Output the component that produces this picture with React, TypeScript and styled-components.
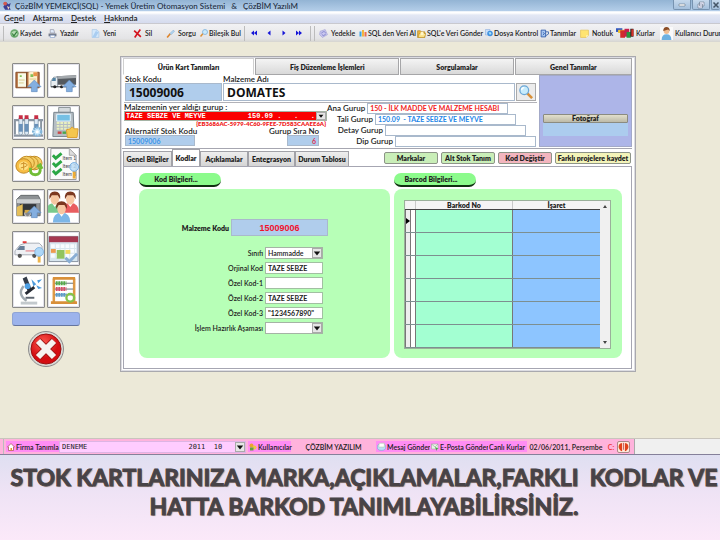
import React from "react";
import styled, { createGlobalStyle, css } from "styled-components";

const Global = createGlobalStyle`
  *, *::before, *::after { box-sizing: border-box; }
  body { margin: 0; background: #f9e8f8; color: #222; font: 7px/10px Lato, sans-serif; }
  button, input, select { font: inherit; color: inherit; margin: 0; border-radius: 0; min-width: 0; }
  button { cursor: pointer; padding: 0; }
  a { color: inherit; text-decoration: none; }
`;

/* ---------- frame ---------- */
const Page = styled.div`
  min-height: 100vh;
  display: flex;
  flex-direction: column;
  overflow: hidden;
`;
const TitleBar = styled.header`
  height: 12px;
  display: flex;
  align-items: center;
  gap: 3px;
  padding-left: 2px;
  background: linear-gradient(#93b4d4, #b4cee9);
  border-bottom: 1px solid #eef4fa;
  font-size: 8px;
  font-weight: 500;
  white-space: pre;
  color: #1c2c40;
`;
const WindowButtons = styled.div`
  margin-left: auto;
  display: flex;
  align-self: stretch;
  gap: 1px;
`;
const WindowButton = styled.button`
  width: 18px;
  height: 10px;
  display: grid;
  place-items: center;
  border: 1px solid #7793b0;
  border-top: 0;
  border-radius: 0 0 2px 2px;
  background: linear-gradient(#c6d9ec, #a5c0dc);
  &:last-child { width: 9px; border-right: 0; }
`;
const MenuBar = styled.nav`
  height: 11px;
  display: flex;
  align-items: center;
  gap: 8px;
  padding-left: 4px;
  background: linear-gradient(#fff 1px, #e3e8f4 3px, #d5dbee);
  font-size: 8px;
  font-weight: 600;
`;
const ToolStrip = styled.div`
  height: 19px;
  display: flex;
  align-items: center;
  background: linear-gradient(#f2f2f4, #e4e4e6 80%, #d6d5d0);
  border-top: 1px solid #c9c9cf;
  padding-left: 3px;
`;
const Rule = styled.span<{ $gap: number }>`
  width: 1px;
  height: 15px;
  flex: none;
  margin-right: ${(p) => p.$gap}px;
  background: #bcbcbc;
`;
const Tool = styled.button<{ $w: number; $gap?: number }>`
  width: ${(p) => p.$w}px;
  flex: none;
  display: flex;
  align-items: center;
  gap: ${(p) => p.$gap ?? 1}px;
  border: 0;
  background: none;
  white-space: nowrap;
  font-size: 7px;
  font-weight: 600;
  svg { flex: none; }
`;
const Workspace = styled.main`
  display: flex;
  align-items: flex-start;
  gap: 40px;
  padding: 14px 84px 66px 12px;
  background: #ece9d8;
`;

/* ---------- side bar ---------- */
const Side = styled.aside`
  width: 68px;
  flex: none;
  display: flex;
  flex-direction: column;
  align-items: center;
  gap: 4px;
  padding-top: 7px;
`;
const IconGrid = styled.div`
  display: grid;
  grid-template-columns: 1fr 1fr;
  gap: 7px 2px;
`;
const IconButton = styled.button`
  height: 35px;
  border: 1px solid #8a8a88;
  border-radius: 1px;
  background: #fff;
  box-shadow: inset 0 0 0 1px #e2e2ea;
  svg { display: block; width: 31px; height: 33px; }
`;
const BlueBar = styled.button`
  width: 100%;
  height: 14px;
  border: 1px solid #8fa4d4;
  border-bottom-color: #65759f;
  border-radius: 3px;
  background: #9cb3ec;
`;
const CloseButton = styled.button`
  border: 0;
  background: none;
  svg { display: block; }
`;

/* ---------- card ---------- */
const Card = styled.section`
  flex: 1;
  min-width: 0;
  padding: 1px 3px 2px 1px;
  background: #fff;
  border: 1px solid #a9a9ae;
  box-shadow: inset 0 0 0 1px #dcdce2;
`;
const MainTabs = styled.div`
  display: grid;
  grid-template-columns: 132fr 145fr 114fr 118fr;
  gap: 1px;
  padding-left: 1px;
`;
const MainTab = styled.button<{ $active?: boolean }>`
  height: 17px;
  border: 1px solid #a6a6a8;
  font-size: 7px;
  font-weight: 800;
  background: linear-gradient(#f4f4f4, #d9d9d9);
  ${(p) => p.$active && css`background: #fff; border-color: #d0d0d0; border-bottom-color: #fff;`}
`;
const Form = styled.div`
  display: flex;
  gap: 2px;
  padding: 0 0 1px 2px;
  border-bottom: 1px solid #a6a6b0;
`;
const FormMain = styled.div`
  flex: 1;
  min-width: 0;
`;
const TopRow = styled.div`
  display: grid;
  grid-template-columns: 97fr 292fr 20px;
  column-gap: 1px;
  align-items: end;
  padding: 0 1px 1px;
  border-bottom: 1px solid #b2b2b8;
`;
const Field = styled.label`
  display: flex;
  flex-direction: column;
  font-size: 8px;
  line-height: 8px;
  font-weight: 600;
  white-space: nowrap;
`;
const Box = styled.input<{ $bg?: string; $h?: number }>`
  width: 100%;
  height: ${(p) => p.$h ?? 11}px;
  padding: 0 2px;
  border: 1px solid #a9b9cc;
  background: ${(p) => p.$bg ?? "#fff"};
  outline: 0;
`;
const BigBox = styled(Box)`
  padding: 0 3px;
  font: 700 12px/14px "Open Sans", sans-serif;
  color: #111;
`;
const SearchButton = styled.button`
  height: 18px;
  display: grid;
  place-items: center;
  border: 1px solid #aaa;
  background: #ececec;
`;
const GroupRow = styled.div`
  display: grid;
  grid-template-columns: 204fr 211fr;
`;
const GroupLeft = styled.div`
  display: flex;
  flex-direction: column;
  min-width: 0;
`;
const SelectWrap = styled.span<{ $h: number; $bg?: string }>`
  display: flex;
  width: 100%;
  height: ${(p) => p.$h}px;
  align-items: stretch;
  border: 1px solid #a5b3a5;
  background: ${(p) => p.$bg ?? "#fff"};
  svg { width: 10px; height: 100%; flex: none; background: #e6e6e6; border: 1px solid #aaa; }
`;
const Select = styled.select`
  flex: 1;
  width: 0;
  border: 0;
  padding: 0 2px;
  appearance: none;
  background: transparent;
  outline: 0;
`;
const RedSelect = styled(Select)`
  color: #fff;
  font: 700 7px/8px "Liberation Mono", monospace;
  padding: 0 1px;
`;
const Guid = styled.div`
  color: #f02020;
  font-size: 6px;
  line-height: 6px;
  font-weight: 800;
  text-align: right;
  padding-right: 1px;
`;
const CodeRow = styled.div`
  display: flex;
  justify-content: space-between;
  padding: 0 8px 0 1px;
`;
const CodeField = styled(Field)<{ $right?: boolean }>`
  align-items: ${(p) => (p.$right ? "flex-end" : "flex-start")};
  input { width: ${(p) => (p.$right ? 32 : 70)}px; color: ${(p) => (p.$right ? "#e02040" : "#2f8fe8")}; font-size: 7px; }
  input { text-align: ${(p) => (p.$right ? "right" : "left")}; }
`;
const GroupList = styled.div`
  display: flex;
  flex-direction: column;
  min-width: 0;
`;
const GroupField = styled.label<{ $in: number; $color?: string }>`
  display: grid;
  grid-template-columns: 1fr 141px;
  gap: 2px;
  align-items: center;
  margin-right: ${(p) => 31 - p.$in}px;
  text-align: right;
  font-size: 8px;
  line-height: 11px;
  font-weight: 600;
  white-space: nowrap;
  input { color: ${(p) => p.$color}; font-size: 7px; font-weight: 700; }
`;
const PhotoPanel = styled.div`
  width: 93px;
  flex: none;
  padding: 38px 3px 8px;
  border: 1px solid #a3a9c8;
  background: #adb5e8;
`;
const PhotoButton = styled.button`
  width: 100%;
  height: 9px;
  display: block;
  border: 1px solid #8b8b80;
  border-radius: 1px;
  background: linear-gradient(#e2dfcc, #bdbaa8);
  font-size: 7px;
  line-height: 7px;
  font-weight: 800;
`;
const PhotoInfo = styled.div`
  height: 13px;
  background: #acccee;
`;

/* ---------- sub tabs ---------- */
const SubBar = styled.div`
  display: flex;
  align-items: flex-end;
  padding-left: 1px;
`;
const SubTab = styled.button<{ $w: number; $active?: boolean }>`
  width: ${(p) => p.$w}px;
  height: 15px;
  border: 1px solid #a2a2a8;
  border-bottom: 0;
  background: linear-gradient(#eee, #d5d5d5);
  font-size: 7px;
  font-weight: 800;
  white-space: nowrap;
  ${(p) => p.$active && css`height: 17px; background: #fff;`}
`;
const Actions = styled.div`
  margin-left: auto;
  align-self: center;
  display: flex;
  gap: 3px;
  padding-right: 1px;
`;
const Action = styled.button<{ $bg: string; $wide?: boolean }>`
  width: ${(p) => (p.$wide ? 76 : 54)}px;
  height: 12px;
  border: 1px solid #8d9488;
  border-radius: 2px;
  background: ${(p) => p.$bg};
  font-size: 7px;
  line-height: 8px;
  font-weight: 800;
  white-space: nowrap;
`;
const Content = styled.div`
  display: grid;
  grid-template-columns: 251fr 228fr;
  gap: 4px;
  padding: 6px 9px 10px 15px;
  margin: 0 0 0 1px;
  border: 1px solid #a6a6b2;
`;
const Column = styled.section`
  display: flex;
  flex-direction: column;
  gap: 2px;
`;
const Pill = styled.h2`
  width: 82px;
  height: 14px;
  margin: 0;
  padding-right: 8px;
  border-radius: 7px;
  border-bottom: 2px solid #103010;
  background: #8cfb8c;
  text-align: center;
  font-size: 7px;
  line-height: 13px;
  font-weight: 800;
`;
const Green = styled.div`
  flex: 1;
  border-radius: 8px;
  background: #b7ffb7;
`;
const KodForm = styled(Green)`
  padding: 30px 62px 20px 24px;
  display: flex;
  flex-direction: column;
  gap: 3px;
`;
const KodLine = styled.label<{ $main?: boolean }>`
  display: grid;
  grid-template-columns: 1fr ${(p) => (p.$main ? 97 : 58)}px;
  gap: 2px;
  align-items: center;
  text-align: right;
  font-size: 7px;
  font-weight: ${(p) => (p.$main ? 800 : 600)};
  white-space: nowrap;
  margin-right: ${(p) => (p.$main ? 0 : 5)}px;
  margin-bottom: ${(p) => (p.$main ? 8 : 0)}px;
`;
const KodBox = styled(Box)`
  font-weight: 700;
  border-color: #a2bfa2;
`;
const MainKod = styled(Box)`
  color: #f0102c;
  text-align: center;
  font: 700 9px/12px "Liberation Sans", sans-serif;
`;
const GridPanel = styled(Green)`
  padding: 11px 11px 9px 10px;
`;
const GridFrame = styled.div`
  display: flex;
  border: 1px solid #9ab09a;
  background: #f0f0f0;
`;
const Table = styled.table`
  flex: 1;
  table-layout: fixed;
  border-collapse: collapse;
  th { height: 8px; padding: 0; background: #f4f4f4; font-size: 7px; line-height: 8px; font-weight: 800; border-bottom: 1px solid #444; }
  th + th { border-left: 1px solid #c8c8c8; }
  td { height: 23px; padding: 0; border-bottom: 1px solid #7d8f90; }
`;
const Col = styled.col<{ $w?: number }>`
  width: ${(p) => (p.$w ? `${p.$w}px` : "auto")};
`;
const Cell = styled.td<{ $bg: string }>`
  background: ${(p) => p.$bg};
  border-left: 1px solid #777;
  svg { display: block; }
`;
const Scroll = styled.div`
  width: 10px;
  display: flex;
  flex-direction: column;
  justify-content: space-between;
  align-items: center;
  padding: 4px 0;
  svg { display: block; }
`;

/* ---------- status bar and caption ---------- */
const StatusRow = styled.footer`
  height: 17px;
  display: flex;
  background: #f0f0f0;
  border-top: 1px solid #c9c5bd;
  border-bottom: 1px solid #85809a;
`;
const Status = styled.div`
  flex: 1;
  margin-right: 86px;
  display: flex;
  align-items: center;
  padding: 0 4px 0 3px;
  background: #ffb3dc;
  border-right: 1px solid #aaa;
  white-space: nowrap;
  font-size: 7px;
  font-weight: 600;
`;
const StatusItem = styled.button<{ $w: number }>`
  width: ${(p) => p.$w}px;
  height: 11px;
  flex: none;
  display: flex;
  align-items: center;
  gap: 1px;
  padding-left: 1px;
  border: 0;
  background: #ff8df4;
  white-space: nowrap;
  svg { flex: none; }
`;
const FirmWrap = styled(SelectWrap)`
  width: 187px;
  flex: none;
  border-color: #ddb4e4;
  margin-right: 2px;
`;
const FirmSelect = styled(Select)`
  font: 500 7px/10px "DejaVu Sans Mono", monospace;
`;
const StatusText = styled.span<{ $w: number; $color?: string }>`
  width: ${(p) => p.$w}px;
  flex: none;
  text-align: center;
  color: ${(p) => p.$color};
`;
const PowerButton = styled.button`
  height: 12px;
  border: 1px solid #a88;
  border-radius: 2px;
  background: #ffe9dc;
  svg { display: block; }
`;
const Caption = styled.h1`
  flex: 1;
  margin: 0;
  padding: 8px 0 0 8px;
  background: linear-gradient(#dfdff1, #efe3f5 45%, #fbe9f9);
  color: #484347;
  text-shadow: 1px 1px 1px #b69c92;
  -webkit-text-stroke: 1px #484347;
  text-align: center;
  white-space: pre-wrap;
  font: 700 23px/29px Lato, sans-serif;
`;

/* ---------- drawings ---------- */
const Svg = ({ s = 9, children }: { s?: number; children: React.ReactNode }) => (
  <svg width={s} height={s} viewBox="0 0 16 16" fill="none" aria-hidden="true">{children}</svg>
);
const Arrow = () => (
  <svg viewBox="0 0 10 10" aria-hidden="true"><path d="M1 3h8L5 8z" fill="#111" /></svg>
);
const Lens = ({ s = 9 }: { s?: number }) => (
  <Svg s={s}>
    <path d="M9 9l6 6" stroke="#d89038" strokeWidth="3" />
    <circle cx="6" cy="6" r="5" fill="#c7ecfc" stroke="#6ba7d6" strokeWidth="1.5" />
    <path d="M3 6q0-3 3-3" stroke="#fff" strokeWidth="1.5" />
  </Svg>
);
const SaveI = () => <Svg><circle cx="8" cy="8" r="7.5" fill="#6aa96d" /><path d="M3 6q5-5 10 0v4q-5 5-10 0z" fill="#b5dab2" /><path d="M4 8l3 4 5-7" stroke="#2e7a36" strokeWidth="2" /></Svg>;
const PrintI = () => <Svg><path d="M4 1h6l2 6H4z" fill="#dfeafa" stroke="#889" /><path d="M1 8h14v5H1z" fill="#777d8c" /><path d="M4 11h8v4H4z" fill="#fff" stroke="#6f8cc0" /></Svg>;
const NewI = () => <Svg><path d="M2 1h8l4 4v10H2z" fill="#d4e8fb" stroke="#9fc0e2" /><path d="M10 1v4h4L8 15H2z" fill="#a9cdf1" /></Svg>;
const DelI = () => <Svg><path d="M2 3l12 11M13 1L3 15" stroke="#d4141f" strokeWidth="3" /></Svg>;
const QueryI = () => <Svg><path d="M2 15l6-7" stroke="#e0862c" strokeWidth="3" /><path d="M7 8l6-6 2 2-6 6z" fill="#b5d8f3" stroke="#78a6d0" /></Svg>;
const FindI = () => <Svg s={8}><path d="M1 15l5-6" stroke="#dc9137" strokeWidth="3" /><circle cx="10" cy="6" r="5" fill="#cbeafb" stroke="#75addb" strokeWidth="1.5" /></Svg>;
const BackupI = () => <Svg><path d="M2 4l9-3 4 9-9 5-5-5z" fill="#c9c7ef" stroke="#9b9ad1" /><path d="M4 8q4-6 8-1M12 9q-4 5-7 1" stroke="#777bc7" strokeWidth="1.5" /></Svg>;
const BarsI = () => <Svg s={8}><path d="M1 5h4v10H1z" fill="#39a3e4" /><path d="M6 2h4v13H6z" fill="#f4b63e" /><path d="M11 6h4v9h-4z" fill="#ed6b50" /></Svg>;
const FolderI = () => <Svg><path d="M1 3h5l2 2h6v10H1z" fill="#e9b33e" stroke="#ad7c18" /><path d="M4 8h12l-3 7H2z" fill="#fce38c" stroke="#b58920" /><circle cx="9" cy="8" r="3" fill="#fff6c9" /></Svg>;
const GlobeI = () => <Svg s={8}><path d="M1 1h9v11H1z" fill="#c9dffa" stroke="#80a4d8" /><circle cx="10" cy="9" r="5.5" fill="#3f90e0" /><path d="M7 7l4-1 2 3-3 3z" fill="#a9e1fa" /></Svg>;
const DefI = () => <Svg><path d="M2 2h8v12H2z" fill="#a9c8f2" stroke="#2a57a8" strokeWidth="1.5" /><path d="M5 6l3 2-3 3M10 5h5v4l-5 3" stroke="#345fa9" strokeWidth="1.5" /></Svg>;
const NoteI = () => <Svg><path d="M1 2h14v9l-4 4H1z" fill="#ffe471" stroke="#e2b93c" /><path d="M15 11h-4v4z" fill="#fff6c2" /></Svg>;
const FlagsI = () => (
  <svg width="18" height="12" viewBox="0 0 34 22" aria-hidden="true">
    <path d="M0 2h12v7H0z" fill="#3157c0" /><path d="M4 5h12v6H4z" fill="#f1c52e" /><path d="M8 6h9v14H8z" fill="#d22b2b" /><path d="M16 3h9v15h-9z" fill="#c71f4d" /><path d="M20 9h8v11h-8z" fill="#2b963d" /><path d="M27 3h6v15h-6z" fill="#202020" /><path d="M29 4h4v13h-4z" fill="#d93028" />
  </svg>
);
const UserI = () => <Svg s={13}><path d="M0 0h16v16H0z" fill="#fafafa" /><path d="M2 16q0-7 6-7t6 7z" fill="#6eb1e1" /><circle cx="8" cy="5" r="3.5" fill="#f0bd92" /><path d="M4 5q0-5 4-5t4 5L10 3z" fill="#8b4d25" /></Svg>;
const HomeI = () => <Svg s={8}><path d="M1 8l7-7 7 7h-2v7H3V8z" fill="#fff" stroke="#a55" strokeWidth="1.5" /><path d="M7 10h3v5H7z" fill="#e5952b" /></Svg>;
const KeyI = () => <Svg s={8}><circle cx="5" cy="5" r="4" fill="#e8a52f" /><circle cx="11" cy="9" r="4" fill="#edc845" /><path d="M2 9h7v6H2z" fill="#62a047" /></Svg>;
const MsgI = () => <Svg><ellipse cx="8" cy="9" rx="7.5" ry="6" fill="#b9dff7" stroke="#76aaca" /><path d="M4 2h9v7H3z" fill="#fff" stroke="#b3c9a6" /></Svg>;
const MailI = () => <Svg s={8}><path d="M1 2h13v10H1z" fill="#e9f4e9" stroke="#8da58d" /><path d="M1 2l7 6 6-6" stroke="#829882" /><path d="M8 8l7 3-3 1-1 4z" fill="#47a547" /></Svg>;
const Nav = ({ d }: { d: string }) => <Svg s={8}><path d={d} fill="#1616d8" /></Svg>;

const Up = () => <path d="M22 16l7 7h-4v5h-6v-5h-4z" fill="#84afe0" stroke="#5b86bb" strokeWidth=".6" />;
const Man = ({ x, y, c }: { x: number; y: number; c: string }) => (
  <g transform={`translate(${x} ${y})`}>
    <path d="M-9 19q0-10 9-10t9 10z" fill={c} /><path d="M-3 9L0 13 3 9z" fill="#fff" />
    <ellipse cx="0" cy="5" rx="4.4" ry="5.6" fill="#f6c7a2" /><path d="M-5.5 5q-1-8 5.500-8t5.500 8L3 1l-6 0z" fill="#7c3820" />
  </g>
);

const sideIcons: { name: string; art: React.ReactNode }[] = [
  { name: "Klasör", art: <><path d="M3 8h24v16H3z" fill="#b97342" stroke="#87502a" /><path d="M5 9h9v14H5z" fill="#f8fae8" /><path d="M16 8l9-1v16h-9z" fill="#fff0ce" /><path d="M7 11h2v2H7zM18 10h3v3h-3z" fill="#83c057" /><path d="M6 16h6M6 19h5M17 15h7" stroke="#d9c98c" /><path d="M14 8v16" stroke="#704424" /><path d="M21 8h4v4h-4z" fill="#e99548" /><Up /></> },
  { name: "Sevkiyat", art: <><path d="M9 12l20-1v10H9z" fill="#545a60" /><path d="M9 12l20-1v3L9 15z" fill="#a4a9ad" /><path d="M3 17l3-4h4v10H3z" fill="#e8edf0" stroke="#687887" strokeWidth=".7" /><path d="M5 14h3v3H4z" fill="#5485a5" /><path d="M3 23h24" stroke="#35393d" /><circle cx="7" cy="23" r="1.6" fill="#222" /><circle cx="14" cy="23" r="1.6" fill="#222" /><Up /></> },
  { name: "Laboratuvar", art: <><path d="M1 14h30M1 30h30" stroke="#8b95a2" strokeWidth="2.4" /><path d="M2 15v14M29 15v14" stroke="#8994a0" strokeWidth="2" />{[6, 12, 22].map((x) => <g key={x}><path d={`M${x} 12h4v16q-2 3-4 0z`} fill="#dce9f5" stroke="#6f8799" strokeWidth=".7" /><path d={`M${x} 18h4v8h-4z`} fill="#6991b9" /><path d={`M${x} 9h4v4h-4z`} fill="#c62e45" /></g>)}<circle cx="25" cy="26" r="4.2" fill="#c9e7fa" stroke="#82b4d8" strokeWidth="2.4" strokeDasharray="2 1" /><circle cx="25" cy="26" r="1.6" fill="#fff" /></> },
  { name: "Kasa", art: <><path d="M11 1h12v5H11z" fill="#d5dadd" stroke="#8d9599" /><path d="M6 6h20l1 25H5z" fill="#b6bec4" stroke="#77838c" /><path d="M9 8h14v7H9z" fill="#76c0e4" stroke="#eaf7ff" />{[17, 20, 23].map((y) => <path key={y} d={`M9 ${y}h14`} stroke="#e9f0bf" strokeWidth="2" strokeDasharray="2.8 1" />)}<path d="M10 27h4" stroke="#c84848" strokeWidth="2.5" /><path d="M15 27h4" stroke="#4da54d" strokeWidth="2.5" /><path d="M19 24l4-1 2-2 2 2h4l-1 9H20z" fill="#f5c64e" stroke="#db9f31" /></> },
  { name: "Maliyet", art: <>{[22, 18, 14].map((x) => <ellipse key={x} cx={x} cy="15" rx="8" ry="7" fill="#f4ce64" stroke="#c18a22" />)}<ellipse cx="11" cy="18" rx="8" ry="7.5" fill="#f7bd43" stroke="#be8624" /><ellipse cx="11" cy="18" rx="5" ry="4.5" fill="#ffe083" /><path d="M11 14v8M8 16q3-2 6 0t-6 4" stroke="#cb8e27" fill="none" /><path d="M18 20q-1 7 5 7t5-7M25 19l3-2 2 4" fill="none" stroke="#72bd36" strokeWidth="3" /></> },
  { name: "Liste", art: <><path d="M3 0h19l7 7v25H2z" fill="#fafafa" stroke="#999" /><path d="M22 0v7h7z" fill="#ddd" stroke="#aaa" />{[7, 15, 23].map((y, i) => <g key={y}><path d={`M5 ${y}l3 3 6-5`} stroke="#2aa744" strokeWidth="3" fill="none" /><text x="15" y={y + 5} fontSize="5" fill="#444">Item {i + 1}</text></g>)}<path d="M27 23v8" stroke="#efad35" strokeWidth="3" /><circle cx="27" cy="19" r="4.5" fill="#b9dcf7" fillOpacity=".8" stroke="#76ade1" /></> },
  { name: "Depo", art: <><path d="M4 9l4-4h18l2 4v17H4z" fill="#8e9295" stroke="#65696c" /><path d="M4 9h24v4H4z" fill="#ced1d2" /><path d="M7 14h17v12H7z" fill="#34383b" /><path d="M4 17l6-3v12H4z" fill="#e5bf59" /><circle cx="15" cy="24" r="3" fill="#888" stroke="#ddd" /><path d="M12 20h7v3h-7z" fill="#d3a94a" /><Up /></> },
  { name: "Personel", art: <><Man x={7} y={4} c="#78ca8c" /><Man x={23} y={4} c="#e95e60" /><Man x={14} y={14} c="#7cb6e7" /></> },
  { name: "Ambulans", art: <><path d="M2 19l5-6 6-2h14l3 3v9H2z" fill="#eef0f4" stroke="#a5abb6" /><path d="M7 14h5v4H4z" fill="#687f98" /><path d="M10 10h4" stroke="#e33939" strokeWidth="2" /><path d="M13 19h16" stroke="#e26f78" /><circle cx="7" cy="24" r="2.2" fill="#555" /><circle cx="22" cy="24" r="2.2" fill="#555" /><path d="M27 23v8" stroke="#efb54b" strokeWidth="3" /><circle cx="27" cy="20" r="4.5" fill="#add7f8" stroke="#83b7e2" /></> },
  { name: "Takvim", art: <><path d="M1 4h30v26H1z" fill="#d8e6ef" stroke="#87919e" /><path d="M1 4h30v6H1z" fill="#a53850" />{[12, 17, 22].map((y) => <path key={y} d={`M3 ${y + 2}h26`} stroke="#f9fcff" strokeWidth="4" strokeDasharray="4 1" />)}<path d="M3 17h5v4H3z" fill="#ed9b4f" /><path d="M9 18h8v9H9z" fill="#91c45f" /><path d="M18 18h5v4h-5z" fill="#f1d85b" /><path d="M18 26l4 4 8-8" fill="none" stroke="#8aaed4" strokeWidth="3" /></> },
  { name: "Analiz", art: <><path d="M11 12q-7 8 3 15" fill="none" stroke="#a1aab0" strokeWidth="2.5" /><path d="M8 28h17v3H8z" fill="#c3c9cd" /><path d="M10 4l4-2 5 13-4 2z" fill="#343c49" /><path d="M13 24h9" stroke="#5e6771" strokeWidth="2" /><circle cx="15" cy="12" r="3" fill="#4ea0e5" /><path d="M19 5l5 5-3 2zM25 6l5-1-4 4zM24 11l6 3-4 1z" fill="#4c9bdd" /><path d="M13 20l9-7" stroke="#252a33" strokeWidth="3" /></> },
  { name: "Hesap", art: <><path d="M6 4v25M27 4v25" stroke="#df9945" strokeWidth="2.6" /><path d="M3 29h27M5 4h23" stroke="#d9903a" strokeWidth="3" /><path d="M7 9h19M7 15h19M7 21h19" stroke="#64727d" /><path d="M8 9h11" stroke="#55aa49" strokeWidth="4" strokeDasharray="2 .6" /><path d="M8 15h11" stroke="#d84d67" strokeWidth="4" strokeDasharray="2 .6" /><path d="M8 21h11" stroke="#5b9bc9" strokeWidth="4" strokeDasharray="2 .6" /><circle cx="23" cy="24" r="4" fill="none" stroke="#86c34b" strokeWidth="2.4" /></> },
];

const tools: { label: string; w: number; icon: React.ReactNode; gap?: number }[] = [
  { label: "Kaydet", w: 38, icon: <SaveI /> },
  { label: "Yazdır", w: 43, icon: <PrintI />, gap: 3 },
  { label: "Yeni", w: 42, icon: <NewI />, gap: 3 },
  { label: "Sil", w: 33, icon: <DelI />, gap: 3 },
  { label: "Sorgu", w: 34, icon: <QueryI />, gap: 3 },
  { label: "Bileşik Bul", w: 44, icon: <FindI /> },
];
const navs = [
  ["İlk", "M8 3v10L2 8zM14 3v10L8 8z"],
  ["Önceki", "M11 3v10L5 8z"],
  ["Sonraki", "M5 3v10l6-5z"],
  ["Son", "M2 3v10l6-5zM8 3v10l6-5z"],
];
const dataTools: { label: string; w: number; icon: React.ReactNode; gap?: number }[] = [
  { label: "Yedekle", w: 40, icon: <BackupI />, gap: 3 },
  { label: "SQL den Veri Al", w: 58, icon: <BarsI /> },
  { label: "SQL'e Veri Gönder", w: 68, icon: <FolderI /> },
  { label: "Dosya Kontrol", w: 55, icon: <GlobeI /> },
  { label: "Tanımlar", w: 40, icon: <DefI /> },
  { label: "Notluk", w: 36, icon: <NoteI />, gap: 3 },
  { label: "Kurlar", w: 44, icon: <FlagsI />, gap: 2 },
  { label: "Kullanıcı Durumu", w: 70, icon: <UserI />, gap: 2 },
];

const kodFields = [
  { label: "Sınıfı", value: "Hammadde", list: true },
  { label: "Orjinal Kod", value: "TAZE SEBZE" },
  { label: "Özel Kod-1", value: "" },
  { label: "Özel Kod-2", value: "TAZE SEBZE" },
  { label: "Özel Kod-3", value: "\"1234567890\"" },
  { label: "İşlem Hazırlık Aşaması", value: "", list: true },
];
const groups = [
  { label: "Ana Gurup", value: "150 - İLK MADDE VE MALZEME HESABI", color: "#f02424" },
  { label: "Tali Gurup", value: "150.09  - TAZE SEBZE VE MEYVE", color: "#1d86e8" },
  { label: "Detay Gurup", value: "" },
  { label: "Dip Gurup", value: "" },
];
const sp = (n: number) => "\u00a0".repeat(n);

export default function App() {
  return (
    <Page>
      <Global />
      <TitleBar>
        <Svg s={10}><path d="M2 9l5-7 3 3 4-2-2 7 2 4H5z" fill="#3b3e91" /><circle cx="5" cy="4" r="3" fill="#d35a4e" /><path d="M8 8l4 2-2 4z" fill="#f1d3bc" /></Svg>
        <span>ÇözBİM YEMEKÇİ(SQL) - Yemek Üretim Otomasyon Sistemi   &amp;   ÇözBİM YazılıM</span>
        <WindowButtons>
          <WindowButton aria-label="Küçült"><Svg s={8}><path d="M2 6h12v4H2z" fill="#fff" stroke="#567" /></Svg></WindowButton>
          <WindowButton aria-label="Geri yükle"><Svg s={8}><path d="M5 2h9v8H5zM2 6h9v8H2z" fill="#eef" stroke="#567" /></Svg></WindowButton>
          <WindowButton aria-label="Kapat"><Svg s={8}><path d="M3 3l10 10M13 3L3 13" stroke="#456" strokeWidth="3" /></Svg></WindowButton>
        </WindowButtons>
      </TitleBar>
      <MenuBar>
        <a href="#genel">Ge<u>n</u>el</a>
        <a href="#aktarma">Ak<u>t</u>arma</a>
        <a href="#destek"><u>D</u>estek</a>
        <a href="#hakkinda"><u>H</u>akkında</a>
      </MenuBar>
      <ToolStrip>
        <Rule $gap={6} />
        {tools.map((t) => <Tool key={t.label} $w={t.w} $gap={t.gap}>{t.icon}{t.label}</Tool>)}
        <Rule $gap={5} />
        {navs.map(([n, d]) => <Tool key={n} $w={15} aria-label={n}><Nav d={d} /></Tool>)}
        <Rule $gap={3} />
        <Rule $gap={4} />
        {dataTools.map((t) => <Tool key={t.label} $w={t.w} $gap={t.gap}>{t.icon}{t.label}</Tool>)}
      </ToolStrip>

      <Workspace>
        <Side>
          <IconGrid>
            {sideIcons.map((i) => (
              <IconButton key={i.name} aria-label={i.name}><svg viewBox="0 0 32 33">{i.art}</svg></IconButton>
            ))}
          </IconGrid>
          <BlueBar aria-label="Bilgi" />
          <CloseButton aria-label="Çıkış">
            <svg width="38" height="38" viewBox="0 0 38 38">
              <defs><radialGradient id="red" cx=".4" cy=".3"><stop offset="0" stopColor="#ff5a50" /><stop offset="1" stopColor="#d40d12" /></radialGradient></defs>
              <circle cx="19" cy="19" r="17.5" fill="#d9d9d6" stroke="#8b8b8b" />
              <circle cx="19" cy="19" r="15" fill="url(#red)" stroke="#911" />
              <path d="M11 11l16 16M27 11L11 27" stroke="#a01818" strokeWidth="7.5" />
              <path d="M11 11l16 16M27 11L11 27" stroke="#f6f3f0" strokeWidth="6" />
            </svg>
          </CloseButton>
        </Side>

        <Card>
          <MainTabs>
            <MainTab $active>Ürün Kart Tanımları</MainTab>
            <MainTab>Fiş Düzenleme İşlemleri</MainTab>
            <MainTab>Sorgulamalar</MainTab>
            <MainTab>Genel Tanımlar</MainTab>
          </MainTabs>
          <Form>
            <FormMain>
              <TopRow>
                <Field>Stok Kodu<BigBox $h={18} $bg="#b0cdec" defaultValue="15009006" /></Field>
                <Field>Malzeme Adı<BigBox $h={18} defaultValue="DOMATES" /></Field>
                <SearchButton aria-label="Ara"><Lens s={14} /></SearchButton>
              </TopRow>
              <GroupRow>
                <GroupLeft>
                  <Field>
                    Malzemenin yer aldığı gurup :
                    <SelectWrap $h={10} $bg="#fa0000">
                      <RedSelect><option>{`TAZE SEBZE VE MEYVE${sp(10)}150.09 .${sp(3)}.${sp(3)}.`}</option></RedSelect>
                      <Arrow />
                    </SelectWrap>
                  </Field>
                  <Guid>{"{EB3686AC-5979-4C60-9FEE-7D583CAAEE6A}"}</Guid>
                  <CodeRow>
                    <CodeField>Alternatif Stok Kodu<Box $bg="#b0cdec" defaultValue="15009006" /></CodeField>
                    <CodeField $right>Gurup Sıra No<Box $bg="#b0cdec" defaultValue="6" /></CodeField>
                  </CodeRow>
                </GroupLeft>
                <GroupList>
                  {groups.map((g, i) => (
                    <GroupField key={g.label} $in={i * 10} $color={g.color}>{g.label}<Box defaultValue={g.value} /></GroupField>
                  ))}
                </GroupList>
              </GroupRow>
            </FormMain>
            <PhotoPanel>
              <PhotoButton>Fotoğraf</PhotoButton>
              <PhotoInfo />
            </PhotoPanel>
          </Form>

          <SubBar>
            <SubTab $w={49}>Genel Bilgiler</SubTab>
            <SubTab $w={28} $active>Kodlar</SubTab>
            <SubTab $w={48}>Açıklamalar</SubTab>
            <SubTab $w={47}>Entegrasyon</SubTab>
            <SubTab $w={54}>Durum Tablosu</SubTab>
            <Actions>
              <Action $bg="#c9eeb8">Markalar</Action>
              <Action $bg="#c9eeb8">Alt Stok Tanım</Action>
              <Action $bg="#f3b5be">Kod Değiştir</Action>
              <Action $bg="#f3f3b8" $wide>Farklı projelere kaydet</Action>
            </Actions>
          </SubBar>

          <Content>
            <Column>
              <Pill>Kod Bilgileri...</Pill>
              <KodForm>
                <KodLine $main>Malzeme Kodu<MainKod $h={17} $bg="#b0cdec" defaultValue="15009006" /></KodLine>
                {kodFields.map((f) => (
                  <KodLine key={f.label}>
                    {f.label}
                    {f.list
                      ? <SelectWrap $h={12}><Select><option>{f.value}</option></Select><Arrow /></SelectWrap>
                      : <KodBox $h={12} defaultValue={f.value} />}
                  </KodLine>
                ))}
              </KodForm>
            </Column>
            <Column>
              <Pill>Barcod Bilgileri...</Pill>
              <GridPanel>
                <GridFrame>
                  <Table>
                    <colgroup><Col $w={5} /><Col $w={5} /><Col $w={97} /><Col /></colgroup>
                    <thead><tr><th colSpan={2} aria-label="Seçim" /><th>Barkod No</th><th>İşaret</th></tr></thead>
                    <tbody>
                      {[0, 1, 2, 3, 4, 5].map((r) => (
                        <tr key={r}>
                          <Cell $bg="#eee">{r === 0 && <svg width="4" height="6" viewBox="0 0 4 6"><path d="M0 0l4 3-4 3z" /></svg>}</Cell>
                          <Cell $bg="#fff" /><Cell $bg="#a3ffd2" /><Cell $bg="#8dc5ff" />
                        </tr>
                      ))}
                    </tbody>
                  </Table>
                  <Scroll>
                    <svg width="4" height="3" viewBox="0 0 4 3"><path d="M0 3l2-3 2 3z" fill="#444" /></svg>
                    <svg width="4" height="3" viewBox="0 0 4 3"><path d="M0 0l2 3 2-3z" fill="#444" /></svg>
                  </Scroll>
                </GridFrame>
              </GridPanel>
            </Column>
          </Content>
        </Card>
      </Workspace>

      <StatusRow>
        <Status>
          <Rule $gap={2} />
          <StatusItem $w={53}><HomeI />Firma Tanımla</StatusItem>
          <FirmWrap $h={12} $bg="#ffccff">
            <FirmSelect aria-label="Firma"><option>{`DENEME${sp(24)}2011${sp(2)}10`}</option></FirmSelect>
            <Arrow />
          </FirmWrap>
          <StatusItem $w={43}><KeyI />Kullanıcılar</StatusItem>
          <StatusText $w={85}>ÇÖZBİM YAZILIM</StatusText>
          <StatusItem $w={54}><MsgI />Mesaj Gönder</StatusItem>
          <StatusItem $w={58}><MailI />E-Posta Gönder</StatusItem>
          <StatusItem $w={39}>Canlı Kurlar</StatusItem>
          <StatusText $w={78}>02/06/2011, Perşembe</StatusText>
          <StatusText $w={12} $color="#e33">C:</StatusText>
          <PowerButton aria-label="Kapat">
            <svg width="11" height="10" viewBox="0 0 16 14"><path d="M6 1Q0 2 1 8q2 5 5 5zM10 1q6 1 5 7-2 5-5 5z" fill="#e2431c" /><path d="M8 1v10" stroke="#a33" /></svg>
          </PowerButton>
        </Status>
      </StatusRow>
      <Caption>{"STOK KARTLARINIZA MARKA,AÇIKLAMALAR,FARKLI  KODLAR VE\nHATTA BARKOD TANIMLAYABİLİRSİNİZ."}</Caption>
    </Page>
  );
}
